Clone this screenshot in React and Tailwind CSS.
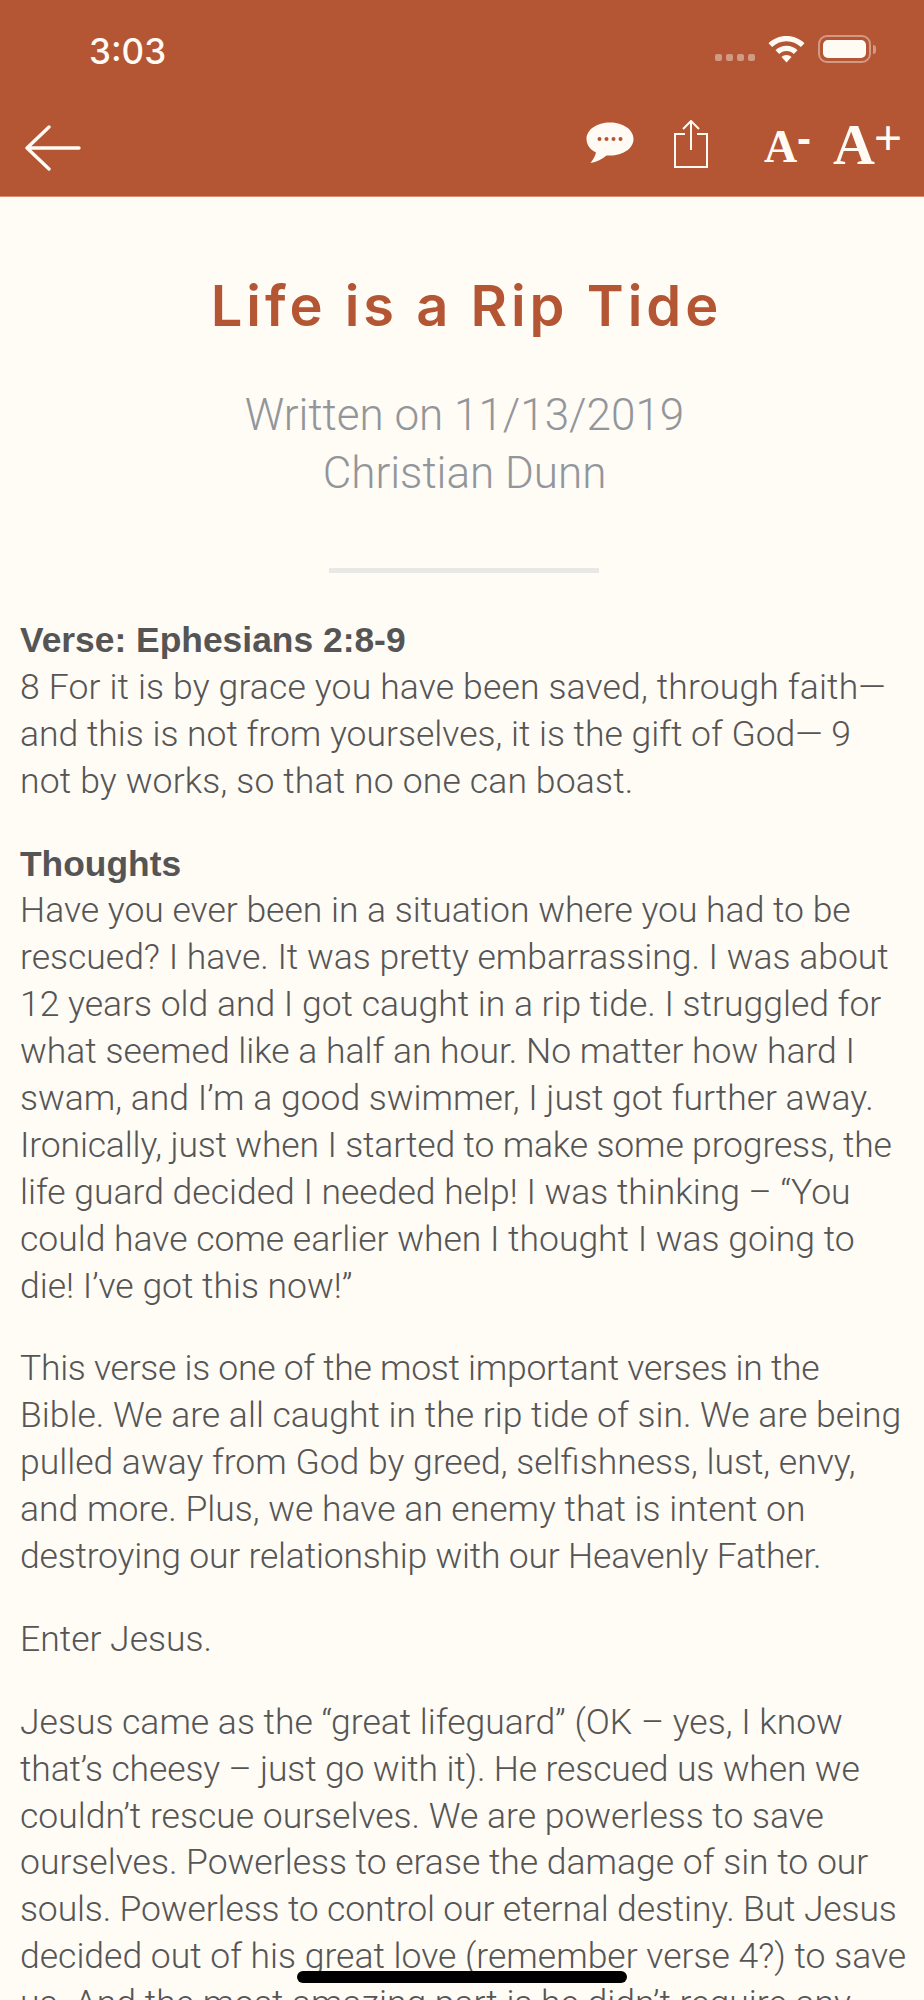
const paragraphs = [
  [
    "Have you ever been in a situation where you had to be",
    "rescued? I have. It was pretty embarrassing. I was about",
    "12 years old and I got caught in a rip tide. I struggled for",
    "what seemed like a half an hour. No matter how hard I",
    "swam, and I’m a good swimmer, I just got further away.",
    "Ironically, just when I started to make some progress, the",
    "life guard decided I needed help! I was thinking – “You",
    "could have come earlier when I thought I was going to",
    "die! I’ve got this now!”",
  ],
  [
    "This verse is one of the most important verses in the",
    "Bible. We are all caught in the rip tide of sin. We are being",
    "pulled away from God by greed, selfishness, lust, envy,",
    "and more. Plus, we have an enemy that is intent on",
    "destroying our relationship with our Heavenly Father.",
  ],
  ["Enter Jesus."],
  [
    "Jesus came as the “great lifeguard” (OK – yes, I know",
    "that’s cheesy – just go with it). He rescued us when we",
    "couldn’t rescue ourselves. We are powerless to save",
    "ourselves. Powerless to erase the damage of sin to our",
    "souls. Powerless to control our eternal destiny. But Jesus",
    "decided out of his great love (remember verse 4?) to save",
    "us. And the most amazing part is he didn’t require any",
  ],
];

// Roboto runs a little wide or narrow on some lines compared to the reference
const lineFit = {
  "Ironically, just when I started to make some progress, the": "tracking-[-0.15px]",
  "This verse is one of the most important verses in the": "tracking-[-0.27px]",
  "destroying our relationship with our Heavenly Father.": "tracking-[-0.2px]",
  "that’s cheesy – just go with it). He rescued us when we": "tracking-[-0.14px]",
  "souls. Powerless to control our eternal destiny. But Jesus": "tracking-[-0.13px]",
};

function Line({ children, className = "" }) {
  return <div className={"h-[46.9px] leading-[46.9px] whitespace-nowrap " + className}>{children}</div>;
}

export default function App() {
  return (
    <div className="relative w-[924px] h-[2000px] overflow-hidden bg-[#fffbf5] font-['Roboto',sans-serif]">
      <header className="h-[197px] bg-[#b45533] border-b border-[#d98c6e] text-[#fffaf3]">
        <div className="flex items-start h-[100px] pt-[30px] pl-[89px]">
          <span className="font-['Inter',sans-serif] font-medium text-[35px] leading-[42px]">3:03</span>
          <div className="ml-auto flex items-center mt-[5px]">
            <div className="flex gap-[4px] mt-[17px] opacity-40">
              <i className="block w-[7px] h-[7px] rounded-[2px] bg-white" />
              <i className="block w-[7px] h-[7px] rounded-[2px] bg-white" />
              <i className="block w-[7px] h-[7px] rounded-[2px] bg-white" />
              <i className="block w-[7px] h-[7px] rounded-[2px] bg-white" />
            </div>
            <svg className="ml-[13px] w-[37px] h-[27px]" viewBox="0 0 37 27" fill="#fffaf3">
              <path d="M18.5 0C11.5 0 5.2 2.7.5 7.2l3.6 3.8C7.8 7.4 12.9 5.2 18.5 5.2s10.700 2.200 14.400 5.800l3.600-3.800C31.800 2.700 25.500 0 18.500 0z" />
              <path d="M18.500 9.800c-4.300 0-8.200 1.700-11 4.400l3.700 3.800c1.900-1.800 4.500-3 7.300-3s5.400 1.200 7.300 3l3.700-3.800c-2.800-2.700-6.700-4.400-11-4.400z" />
              <path d="M18.500 19c-2 0-3.800.8-5 2l5 5.500 5-5.500c-1.200-1.200-3-2-5-2z" />
            </svg>
            <div className="ml-[13px] w-[53px] h-[28px] rounded-[9px] border-2 border-white/40 p-[3px]">
              <div className="h-full rounded-[5px] bg-[#fffaf3]" />
            </div>
            <div className="ml-[2px] mr-[48px] w-[3px] h-[9px] rounded-r-full bg-white/40" />
          </div>
        </div>
        <div className="flex items-start pl-[25px]">
          <svg className="mt-[25px] w-[56px] h-[46px]" viewBox="0 0 56 46" fill="none" stroke="#fffaf3" strokeWidth="3.4" strokeLinecap="round" strokeLinejoin="round">
            <path d="M54 23H2M24 2L2 23l22 21" />
          </svg>
          <svg className="ml-auto mt-[22px] w-[48px] h-[42px]" viewBox="0 0 48 42" fill="#fffaf3">
            <path d="M24 .5C11 .5.5 7.500.5 17c0 5.700 3.500 10.500 9.500 13.500-.8 3.700-3 7.300-5.500 10.500 6-1 12-3.800 16-7.500h3.500c13 0 23.500-7 23.500-16.500S37 .5 24 .5z" />
            <circle cx="13.500" cy="17" r="2" fill="#b45533" />
            <circle cx="20.500" cy="17" r="2" fill="#b45533" />
            <circle cx="27.500" cy="17" r="2" fill="#b45533" />
            <circle cx="34.500" cy="17" r="2" fill="#b45533" />
          </svg>
          <svg className="ml-[40px] mt-[20px] w-[34px] h-[48px]" viewBox="0 0 34 48" fill="none" stroke="#fffaf3" strokeWidth="2">
            <path d="M11 14H1v33h32V14H23" />
            <path d="M17 30V1M9 9l8-8 8 8" />
          </svg>
          <span className="ml-[56px] mt-[19px] font-['Liberation_Serif',serif] font-bold text-[46px] leading-[56px]">A</span>
          <span className="font-['Liberation_Sans',sans-serif] font-bold text-[42px] leading-[56px] mt-[11px] w-[14px]">-</span>
          <span className="ml-[22px] mt-[12px] font-['Liberation_Serif',serif] font-bold text-[58px] leading-[66px]">A</span>
          <span className="ml-[-1px] mr-[22px] mt-[10px] w-[28px] font-['Liberation_Sans',sans-serif] text-[48px] leading-[56px]">+</span>
        </div>
      </header>

      <h1 className="mt-[75px] pl-[9px] text-center font-['Inter',sans-serif] font-semibold text-[#b45533] text-[56px] leading-[68px] tracking-[4px]">
        Life is a Rip Tide
      </h1>
      <div className="mt-[46px] pl-[5px] text-center font-light text-[44px] leading-[58px] text-[#92969a]">
        <div>Written on 11/13/2019</div>
        <div>Christian Dunn</div>
      </div>
      <div className="ml-[329px] mt-[66px] w-[270px] h-[5px] bg-[#e8e8e6]" />

      <main className="mt-[44px] px-[20px] text-[35.5px] font-light text-[#555555]">
        <Line className="font-['Liberation_Sans',sans-serif] font-bold text-[35.4px]">Verse: Ephesians 2:8-9</Line>
        <Line className="tracking-[0.16px]">8 For it is by grace you have been saved, through faith—</Line>
        <Line>and this is not from yourselves, it is the gift of God— 9</Line>
        <Line className="tracking-[0.16px]">not by works, so that no one can boast.</Line>
        <Line className="font-['Liberation_Sans',sans-serif] font-bold text-[35.4px] mt-[36px]">Thoughts</Line>
        {paragraphs.map((lines, i) => (
          <div key={i} className={i === 0 ? "" : "mt-[36px]"}>
            {lines.map((t) => (
              <Line key={t} className={lineFit[t] || ""}>{t}</Line>
            ))}
          </div>
        ))}
      </main>

      {/* home indicator */}
      <div className="absolute bottom-[17px] left-[297px] w-[330px] h-[12px] rounded-full bg-black" />
    </div>
  );
}
